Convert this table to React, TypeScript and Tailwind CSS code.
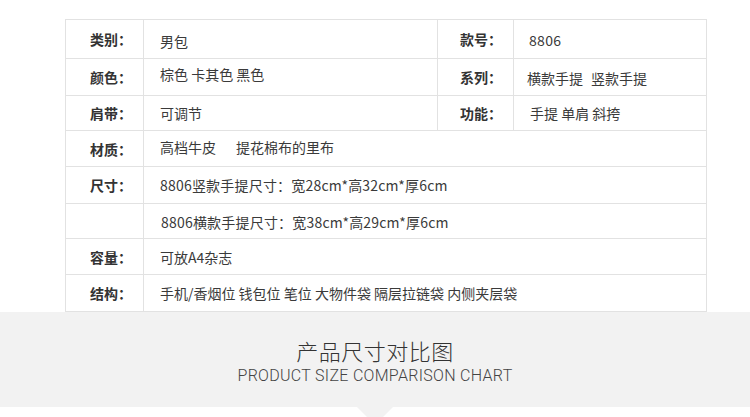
import React from "react";

const bc = "border-[#e2e2e2]";

function Label({ children, w, pl }: { children?: React.ReactNode; w: string; pl: string }) {
  return (
    <div className={`${w} ${pl} h-full shrink-0 border-r ${bc} flex items-center font-bold text-[#333]`}>
      {children}
    </div>
  );
}

function Value({ children, w, pl, extra = "" }: { children?: React.ReactNode; w: string; pl: string; extra?: string }) {
  return (
    <div className={`${w} ${pl} h-full shrink-0 border-r ${bc} flex items-center text-[#3a3a3a] whitespace-nowrap`}>
      <span className={extra}>{children}</span>
    </div>
  );
}

export default function App() {
  return (
    <div className="w-[750px] h-[417px] bg-white overflow-hidden font-['Noto_Sans_CJK_SC',sans-serif]">
      <div className="pt-[19px] pl-[65px]">
        <div className={`w-[642px] border-l border-t ${bc} text-[14px] leading-none`}>
          <div className={`h-[39px] flex border-b ${bc}`}>
            <Label w="w-[78px]" pl="pl-[24px]">类别：</Label>
            <Value w="w-[294px]" pl="pl-[16px]" extra="translate-y-[2px]">男包</Value>
            <Label w="w-[76px]" pl="pl-[22px]">款号：</Label>
            <Value w="w-[193px]" pl="pl-[15px]" extra="translate-y-[1px] tracking-[0.3px]">8806</Value>
          </div>
          <div className={`h-[37px] flex border-b ${bc}`}>
            <Label w="w-[78px]" pl="pl-[24px]">颜色：</Label>
            <Value w="w-[294px]" pl="pl-[16px]" extra="-translate-y-[3px]">棕色 卡其色 黑色</Value>
            <Label w="w-[76px]" pl="pl-[22px]">系列：</Label>
            <Value w="w-[193px]" pl="pl-[13px]" extra="translate-y-[1px]">
              横款手提<span className="ml-[8px]">竖款手提</span>
            </Value>
          </div>
          <div className={`h-[35px] flex border-b ${bc}`}>
            <Label w="w-[78px]" pl="pl-[24px]">肩带：</Label>
            <Value w="w-[294px]" pl="pl-[16px]">可调节</Value>
            <Label w="w-[76px]" pl="pl-[22px]">功能：</Label>
            <Value w="w-[193px]" pl="pl-[16px]">手提 单肩 斜挎</Value>
          </div>
          <div className={`h-[36px] flex border-b ${bc}`}>
            <Label w="w-[78px]" pl="pl-[24px]">材质：</Label>
            <Value w="w-[563px]" pl="pl-[16px]" extra="-translate-y-[2px]">
              高档牛皮<span className="ml-[20px]">提花棉布的里布</span>
            </Value>
          </div>
          <div className={`h-[37px] flex border-b ${bc}`}>
            <Label w="w-[78px]" pl="pl-[24px]">尺寸：</Label>
            <Value w="w-[563px]" pl="pl-[16px]" extra="tracking-[0.2px]">8806竖款手提尺寸：宽28cm*高32cm*厚6cm</Value>
          </div>
          <div className={`h-[35px] flex border-b ${bc}`}>
            <Label w="w-[78px]" pl="pl-[24px]"></Label>
            <Value w="w-[563px]" pl="pl-[17px]" extra="translate-y-[1px] tracking-[0.2px]">8806横款手提尺寸：宽38cm*高29cm*厚6cm</Value>
          </div>
          <div className={`h-[36px] flex border-b ${bc}`}>
            <Label w="w-[78px]" pl="pl-[24px]">容量：</Label>
            <Value w="w-[563px]" pl="pl-[16px]">可放A4杂志</Value>
          </div>
          <div className={`h-[37px] flex border-b ${bc}`}>
            <Label w="w-[78px]" pl="pl-[24px]">结构：</Label>
            <Value w="w-[563px]" pl="pl-[16px]">手机/香烟位 钱包位 笔位 大物件袋 隔层拉链袋 内侧夹层袋</Value>
          </div>
        </div>
      </div>
      <div className="h-[95px] bg-[#f2f2f2] flex flex-col items-center pt-[26px]">
        <div className="text-[22px] leading-[24px] font-light text-[#333] tracking-[0.5px]">产品尺寸对比图</div>
        <div className="mt-[5px] text-[16px] leading-[18px] font-light text-[#444] font-['Roboto',sans-serif] tracking-[0.3px]">
          PRODUCT SIZE COMPARISON CHART
        </div>
      </div>
      <div className="flex justify-center">
        <div className="w-0 h-0 border-x-[18px] border-x-transparent border-t-[18px] border-t-[#f2f2f2]" />
      </div>
    </div>
  );
}
